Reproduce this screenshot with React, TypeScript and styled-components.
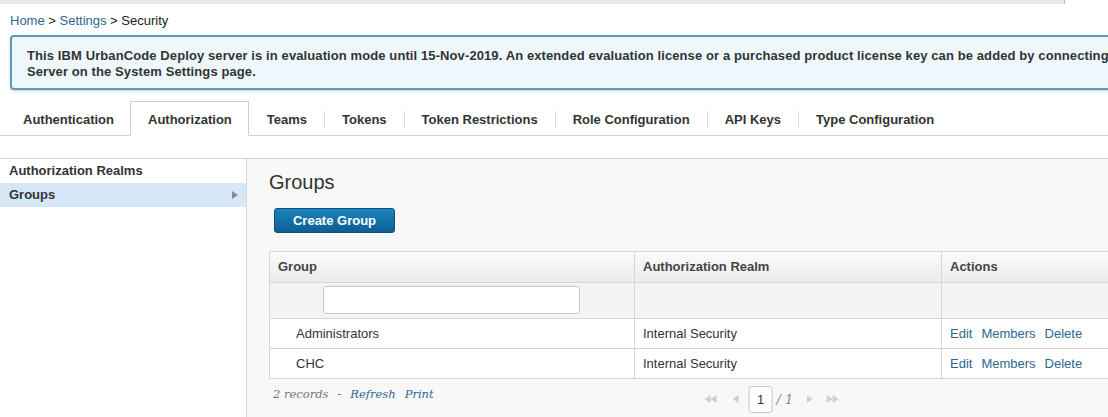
import React from "react";
import styled, { createGlobalStyle } from "styled-components";

const Global = createGlobalStyle`
  html, body { margin: 0; padding: 0; background: #fff; overflow: hidden; }
  body { font-family: "Liberation Sans", Arial, sans-serif; font-size: 13px; color: #333; }
  * { box-sizing: border-box; }
`;

const Page = styled.div`
  width: 1290px;
  height: 417px;
  display: flex;
  flex-direction: column;
  position: relative;
`;

const TopStrip = styled.div`
  width: 1065px;
  height: 4px;
  background: #e8e8e8;
  border-right: 1px solid #bbb;
`;

const Breadcrumb = styled.div`
  padding: 9px 0 0 10px;
  height: 31px;
  font-size: 13px;
  line-height: 16px;
  color: #222;
`;

const Crumb = styled.a`
  color: #2d6790;
  text-decoration: none;
`;

const Banner = styled.div`
  margin-left: 10px;
  width: 1240px;
  height: 56px;
  border: 2px solid #5b9bbd;
  border-radius: 4px;
  background: #eef8fc;
  box-shadow: 0 1px 3px rgba(0, 0, 0, 0.18);
  padding: 11px 0 0 15px;
  font-weight: bold;
  font-size: 13px;
  line-height: 16px;
  letter-spacing: 0.1px;
  color: #333;
  white-space: nowrap;
`;

const TabBar = styled.div`
  margin-top: 11px;
  height: 35px;
  display: flex;
  align-items: stretch;
  padding-left: 5px;
  border-bottom: 1px solid #d0d0d0;
`;

const Tab = styled.div<{ $active?: boolean; $sep?: boolean }>`
  display: flex;
  align-items: center;
  padding: 1px 16px 0 17px;
  font-weight: bold;
  font-size: 13px;
  color: #333;
  position: relative;
  background: #fff;
  border: 1px solid ${(p) => (p.$active ? "#d0d0d0" : "transparent")};
  border-bottom: ${(p) => (p.$active ? "1px solid #fff" : "none")};
  margin-bottom: ${(p) => (p.$active ? "-1px" : "0")};
  &:first-child {
    padding-right: 15px;
  }
  &::before {
    content: "";
    display: ${(p) => (p.$sep ? "block" : "none")};
    position: absolute;
    left: -1px;
    top: 9px;
    height: 17px;
    width: 1px;
    background: #dcdcdc;
  }
`;

const Body = styled.div`
  margin-top: 22px;
  flex: 1;
  display: flex;
  border-top: 1px solid #d8d8d8;
`;

const Sidebar = styled.div`
  width: 247px;
  flex-shrink: 0;
  background: #fff;
  border-right: 1px solid #d8d8d8;
`;

const SideItem = styled.div<{ $selected?: boolean }>`
  height: 24px;
  display: flex;
  align-items: center;
  justify-content: space-between;
  padding: 0 8px 0 9px;
  font-weight: bold;
  font-size: 13px;
  color: #333;
  background: ${(p) => (p.$selected ? "#d6e7f8" : "transparent")};
`;

const Arrow = styled.span`
  width: 0;
  height: 0;
  border-top: 4px solid transparent;
  border-bottom: 4px solid transparent;
  border-left: 6px solid #8a8a8a;
`;

const Main = styled.div`
  flex: 1;
  background: #f8f8f8;
  padding: 11px 0 0 22px;
`;

const Title = styled.h1`
  margin: 0;
  font-weight: normal;
  font-size: 20px;
  line-height: 24px;
  color: #333;
`;

const PrimaryButton = styled.button`
  margin: 14px 0 0 5px;
  width: 121px;
  height: 25px;
  border: 1px solid #0b4f7a;
  border-radius: 3px;
  background: linear-gradient(#1b83bd, #0d5f92);
  color: #fff;
  font-family: "Liberation Sans", Arial, sans-serif;
  font-weight: bold;
  font-size: 13px;
  padding: 0;
`;

const Table = styled.div`
  margin-top: 18px;
  width: 1006px;
  border: 1px solid #d6d6d6;
  border-bottom: none;
`;

const Row = styled.div<{ $kind?: "head" | "filter" | "data" }>`
  display: grid;
  grid-template-columns: 364px 307px 1fr;
  height: ${(p) => (p.$kind === "head" ? "31px" : p.$kind === "filter" ? "36px" : "30px")};
  background: ${(p) =>
    p.$kind === "head"
      ? "linear-gradient(#fbfbfb, #ececec)"
      : p.$kind === "filter"
      ? "#f4f4f4"
      : "#fff"};
  border-bottom: 1px solid #d6d6d6;
`;

const Cell = styled.div<{ $head?: boolean; $indent?: number }>`
  display: flex;
  align-items: center;
  padding-left: ${(p) => (p.$indent ?? 8)}px;
  font-weight: ${(p) => (p.$head ? "bold" : "normal")};
  color: ${(p) => (p.$head ? "#444" : "#333")};
  font-size: 13px;
  & + & {
    border-left: 1px solid #d6d6d6;
  }
`;

const FilterInput = styled.input`
  width: 257px;
  height: 28px;
  border: 1px solid #c8c8c8;
  border-radius: 3px;
  background: #fff;
  margin-left: 45px;
`;

const LinkGroup = styled.div`
  display: flex;
  gap: 9px;
`;

const Link = styled.a`
  color: #2d6790;
  text-decoration: none;
  font-size: 13px;
`;

const Footer = styled.div`
  width: 1006px;
  height: 38px;
  display: flex;
  align-items: center;
  position: relative;
`;

const Records = styled.div`
  font-family: "DejaVu Serif", Georgia, serif;
  font-style: italic;
  font-size: 11.5px;
  color: #777;
  padding-left: 4px;
  display: flex;
  gap: 9px;
  margin-top: -8px;
`;

const SerifLink = styled.a`
  color: #2d6790;
  text-decoration: none;
`;

const Pager = styled.div`
  position: absolute;
  left: 50%;
  transform: translateX(-50%);
  top: 7px;
  display: flex;
  align-items: center;
`;

const PagerIcon = styled.span<{ $ml?: number }>`
  display: flex;
  margin-left: ${(p) => p.$ml ?? 0}px;
`;

const PageBox = styled.div`
  width: 24px;
  height: 27px;
  margin-left: 9px;
  border: 1px solid #c8c8c8;
  border-radius: 3px;
  background: #fff;
  display: flex;
  align-items: center;
  justify-content: center;
  font-size: 13px;
  color: #333;
`;

const PageTotal = styled.span`
  font-family: "DejaVu Serif", Georgia, serif;
  font-style: italic;
  color: #888;
  font-size: 13px;
  margin-left: 4px;
`;

const Tri = ({ dir, double }: { dir: "l" | "r"; double?: boolean }) => {
  const one = (x: number) =>
    dir === "l" ? `M${x + 6} 0 L${x} 4 L${x + 6} 8 Z` : `M${x} 0 L${x + 6} 4 L${x} 8 Z`;
  return (
    <svg width={double ? 13 : 7} height={8} viewBox={`0 0 ${double ? 13 : 7} 8`}>
      <path d={one(0)} fill="#cfcfcf" />
      {double && <path d={one(6)} fill="#cfcfcf" />}
    </svg>
  );
};

const tabs = [
  "Authentication",
  "Authorization",
  "Teams",
  "Tokens",
  "Token Restrictions",
  "Role Configuration",
  "API Keys",
  "Type Configuration",
];

const rows = ["Administrators", "CHC"];

export default function App() {
  return (
    <>
      <Global />
      <Page>
        <TopStrip />
        <Breadcrumb>
          <Crumb>Home</Crumb> &gt; <Crumb>Settings</Crumb> &gt; Security
        </Breadcrumb>
        <Banner>
          This IBM UrbanCode Deploy server is in evaluation mode until 15-Nov-2019. An extended
          evaluation license or a purchased product license key can be added by connecting
          <br />
          Server on the System Settings page.
        </Banner>
        <TabBar>
          {tabs.map((t, i) => (
            <Tab key={t} $active={i === 1} $sep={i > 2}>
              {t}
            </Tab>
          ))}
        </TabBar>
        <Body>
          <Sidebar>
            <SideItem>Authorization Realms</SideItem>
            <SideItem $selected>
              Groups
              <Arrow />
            </SideItem>
          </Sidebar>
          <Main>
            <Title>Groups</Title>
            <PrimaryButton>Create Group</PrimaryButton>
            <Table>
              <Row $kind="head">
                <Cell $head>Group</Cell>
                <Cell $head>Authorization Realm</Cell>
                <Cell $head>Actions</Cell>
              </Row>
              <Row $kind="filter">
                <Cell $indent={8}>
                  <FilterInput />
                </Cell>
                <Cell />
                <Cell />
              </Row>
              {rows.map((r) => (
                <Row key={r} $kind="data">
                  <Cell $indent={26}>{r}</Cell>
                  <Cell>Internal Security</Cell>
                  <Cell>
                    <LinkGroup>
                      <Link>Edit</Link>
                      <Link>Members</Link>
                      <Link>Delete</Link>
                    </LinkGroup>
                  </Cell>
                </Row>
              ))}
            </Table>
            <Footer>
              <Records>
                <span>2 records</span>
                <span>-</span>
                <SerifLink>Refresh</SerifLink>
                <SerifLink>Print</SerifLink>
              </Records>
              <Pager>
                <PagerIcon>
                  <Tri dir="l" double />
                </PagerIcon>
                <PagerIcon $ml={15}>
                  <Tri dir="l" />
                </PagerIcon>
                <PageBox>1</PageBox>
                <PageTotal>/ 1</PageTotal>
                <PagerIcon $ml={13}>
                  <Tri dir="r" />
                </PagerIcon>
                <PagerIcon $ml={13}>
                  <Tri dir="r" double />
                </PagerIcon>
              </Pager>
            </Footer>
          </Main>
        </Body>
      </Page>
    </>
  );
}
